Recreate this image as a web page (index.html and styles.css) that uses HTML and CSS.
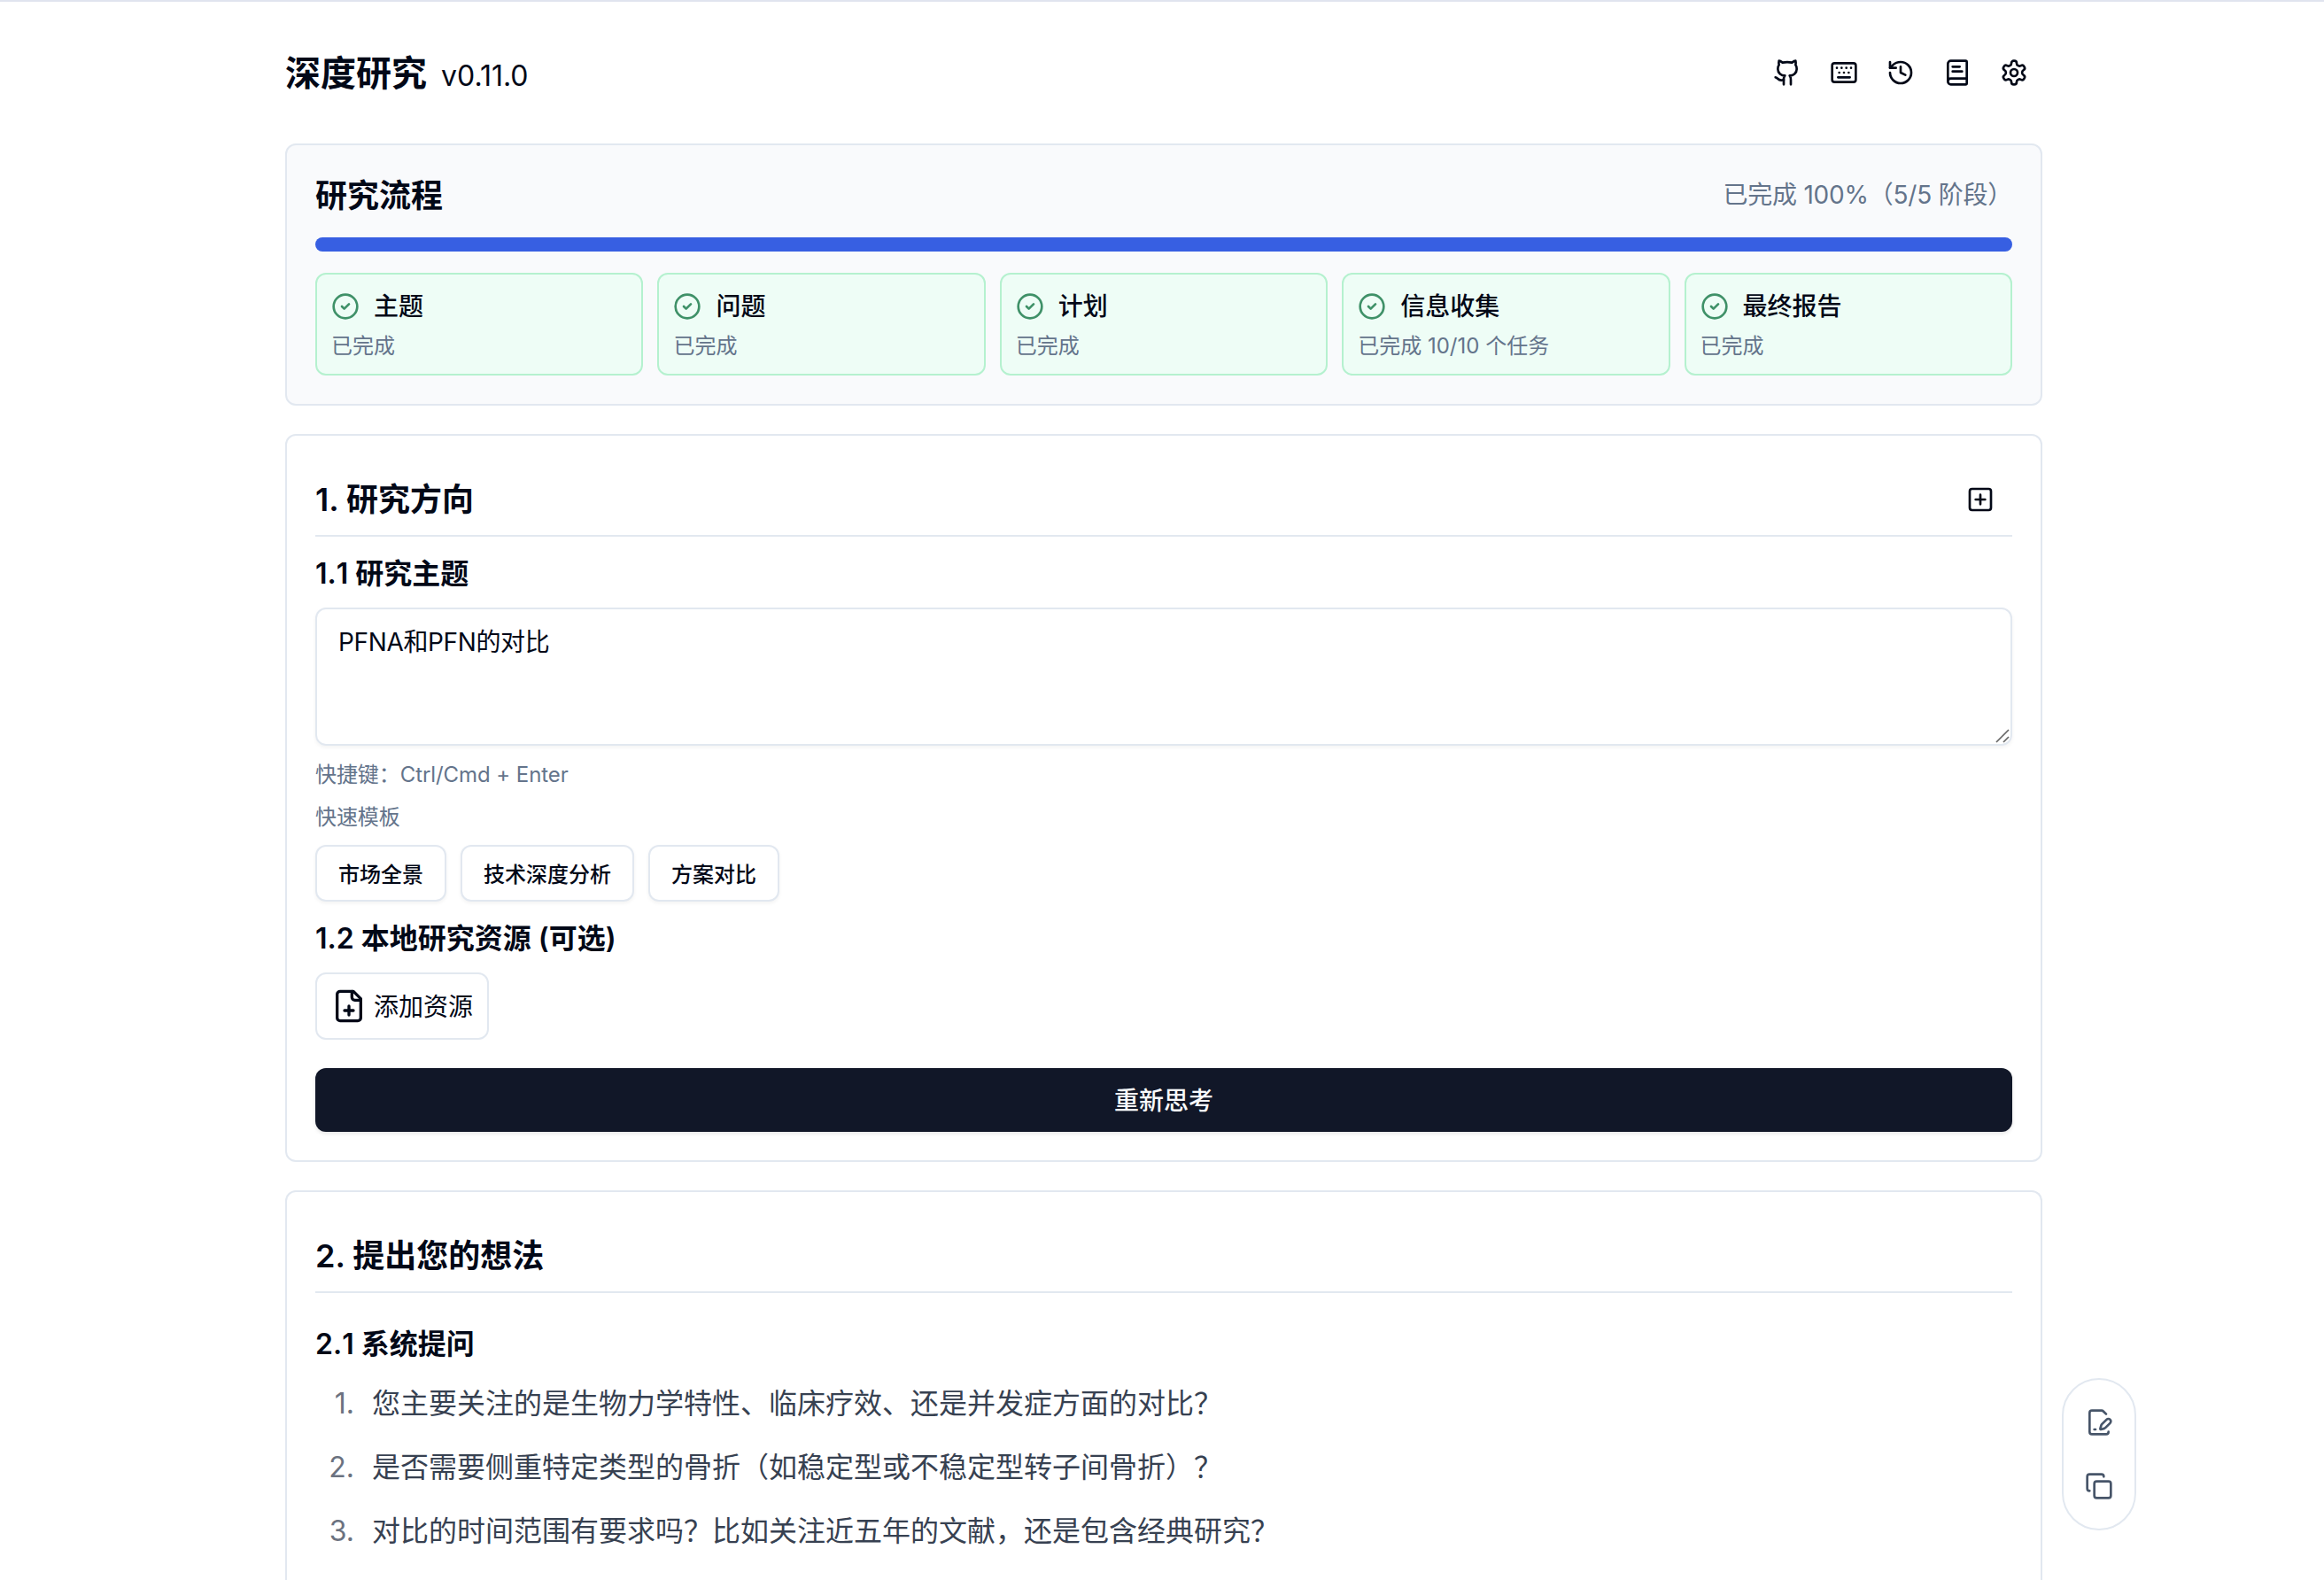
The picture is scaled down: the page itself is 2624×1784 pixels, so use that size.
FILE: index.html
```html
<!DOCTYPE html>
<html lang="zh-CN">
<head>
<meta charset="utf-8">
<title>深度研究</title>
<link rel="stylesheet" href="styles.css">
</head>
<body>
<svg width="0" height="0" class="defs">
  <symbol id="check" viewBox="0 0 24 24"><circle cx="12" cy="12" r="10"/><path d="m9 12 2 2 4-4"/></symbol>
</svg>
<div class="page">
  <header class="header">
    <h1 class="brand">深度研究 <small class="version">v0.11.0</small></h1>
    <nav class="tools">
      <a class="tool"><svg class="icon" viewBox="0 0 24 24"><path d="M15 22v-4a4.8 4.8 0 0 0-1-3.5c3 0 6-2 6-5.5.08-1.25-.27-2.48-1-3.5.28-1.15.28-2.35 0-3.5 0 0-1 0-3 1.5-2.64-.5-5.36-.5-8 0C6 2 5 2 5 2c-.3 1.15-.3 2.35 0 3.5A5.403 5.403 0 0 0 4 9c0 3.5 3 5.5 6 5.5-.39.49-.68 1.05-.85 1.65-.17.6-.22 1.23-.15 1.85v4"/><path d="M9 18c-4.51 2-5-2-7-2"/></svg></a>
      <a class="tool"><svg class="icon" viewBox="0 0 24 24"><path d="M10 8h.01M12 12h.01M14 8h.01M16 12h.01M18 8h.01M6 8h.01M7 16h10M8 12h.01"/><rect width="20" height="16" x="2" y="4" rx="2"/></svg></a>
      <a class="tool"><svg class="icon" viewBox="0 0 24 24"><path d="M3 12a9 9 0 1 0 9-9 9.75 9.75 0 0 0-6.74 2.74L3 8"/><path d="M3 3v5h5M12 7v5l4 2"/></svg></a>
      <a class="tool"><svg class="icon" viewBox="0 0 24 24"><path d="M4 19.5v-15A2.5 2.5 0 0 1 6.5 2H19a1 1 0 0 1 1 1v18a1 1 0 0 1-1 1H6.500a1 1 0 0 1 0-5H20M8 11h8M8 7h6"/></svg></a>
      <a class="tool"><svg class="icon" viewBox="0 0 24 24"><path d="M12.220 2h-.44a2 2 0 0 0-2 2v.18a2 2 0 0 1-1 1.730l-.43.25a2 2 0 0 1-2 0l-.15-.08a2 2 0 0 0-2.730.73l-.22.38a2 2 0 0 0 .73 2.730l.15.1a2 2 0 0 1 1 1.720v.51a2 2 0 0 1-1 1.740l-.15.09a2 2 0 0 0-.73 2.730l.22.38a2 2 0 0 0 2.730.73l.15-.08a2 2 0 0 1 2 0l.43.25a2 2 0 0 1 1 1.730V20a2 2 0 0 0 2 2h.44a2 2 0 0 0 2-2v-.18a2 2 0 0 1 1-1.730l.43-.25a2 2 0 0 1 2 0l.15.08a2 2 0 0 0 2.730-.73l.22-.39a2 2 0 0 0-.73-2.730l-.15-.08a2 2 0 0 1-1-1.740v-.5a2 2 0 0 1 1-1.740l.15-.09a2 2 0 0 0 .73-2.730l-.22-.38a2 2 0 0 0-2.730-.73l-.15.08a2 2 0 0 1-2 0l-.43-.25a2 2 0 0 1-1-1.730V4a2 2 0 0 0-2-2z"/><circle cx="12" cy="12" r="3"/></svg></a>
    </nav>
  </header>

  <section class="card flow">
    <div class="flow-head">
      <h2 class="flow-title">研究流程</h2>
      <span class="flow-status">已完成 100%（5/5 阶段）</span>
    </div>
    <div class="progress"></div>
    <div class="steps">
      <div class="step"><div class="step-name"><svg class="icon ok"><use href="#check"/></svg>主题</div><p class="step-note">已完成</p></div>
      <div class="step"><div class="step-name"><svg class="icon ok"><use href="#check"/></svg>问题</div><p class="step-note">已完成</p></div>
      <div class="step"><div class="step-name"><svg class="icon ok"><use href="#check"/></svg>计划</div><p class="step-note">已完成</p></div>
      <div class="step"><div class="step-name"><svg class="icon ok"><use href="#check"/></svg>信息收集</div><p class="step-note">已完成 10/10 个任务</p></div>
      <div class="step"><div class="step-name"><svg class="icon ok"><use href="#check"/></svg>最终报告</div><p class="step-note">已完成</p></div>
    </div>
  </section>

  <section class="card">
    <div class="card-head">
      <h3 class="card-title">1. 研究方向</h3>
      <a class="add"><svg class="icon" viewBox="0 0 24 24"><rect width="18" height="18" x="3" y="3" rx="2"/><path d="M8 12h8M12 8v8"/></svg></a>
    </div>
    <h4 class="label label-topic">1.1 研究主题</h4>
    <div class="topic">PFNA和PFN的对比<svg class="grip" viewBox="0 0 20 20"><path d="M4 18 18 4M12 18l6-6"/></svg></div>
    <p class="hint">快捷键：Ctrl/Cmd + Enter</p>
    <p class="hint">快速模板</p>
    <div class="templates">
      <button class="template">市场全景</button>
      <button class="template">技术深度分析</button>
      <button class="template">方案对比</button>
    </div>
    <h4 class="label label-resource">1.2 本地研究资源 (可选)</h4>
    <button class="resource"><svg class="icon icon-lg" viewBox="0 0 24 24"><path d="M15 2H6a2 2 0 0 0-2 2v16a2 2 0 0 0 2 2h12a2 2 0 0 0 2-2V7Z"/><path d="M14 2v4a2 2 0 0 0 2 2h4M9 15h6M12 18v-6"/></svg><span class="resource-text">添加资源</span></button>
    <button class="submit">重新思考</button>
  </section>

  <section class="card ideas">
    <div class="card-head"><h3 class="card-title">2. 提出您的想法</h3></div>
    <h4 class="label label-ask">2.1 系统提问</h4>
    <div class="questions">
      <div class="question"><span class="num">1.</span><span>您主要关注的是生物力学特性、临床疗效、还是并发症方面的对比？</span></div>
      <div class="question"><span class="num">2.</span><span>是否需要侧重特定类型的骨折（如稳定型或不稳定型转子间骨折）？</span></div>
      <div class="question"><span class="num">3.</span><span>对比的时间范围有要求吗？比如关注近五年的文献，还是包含经典研究？</span></div>
    </div>
  </section>
</div>

<aside class="dock">
  <svg class="icon" viewBox="0 0 24 24"><path d="m18 5-2.414-2.414A2 2 0 0 0 14.172 2H6a2 2 0 0 0-2 2v16a2 2 0 0 0 2 2h12a2 2 0 0 0 2-2"/><path d="M21.378 12.626a1 1 0 0 0-3.004-3.004l-4.010 4.012a2 2 0 0 0-.506.854l-.837 2.870a.5.5 0 0 0 .62.62l2.870-.837a2 2 0 0 0 .854-.506z"/><path d="M8 18h1"/></svg>
  <svg class="icon" viewBox="0 0 24 24"><rect width="14" height="14" x="8" y="8" rx="2"/><path d="M4 16c-1.100 0-2-.9-2-2V4c0-1.100.9-2 2-2h10c1.100 0 2 .9 2 2"/></svg>
</aside>
</body>
</html>
```
FILE: styles.css
```css
* { box-sizing: border-box; margin: 0; padding: 0; }
html, body { height: 1784px; overflow: hidden; }
body {
  background: #fff;
  border-top: 2px solid #e0e4ef;
  color: #020817;
  font-family: Inter, "Noto Sans CJK SC", sans-serif;
  font-size: 32px;
  text-spacing-trim: space-all;
}
button { font: inherit; color: inherit; background: #fff; }
.defs { position: absolute; }
.page { width: 1984px; margin-left: 322px; }

.icon {
  width: 32px;
  height: 32px;
  flex: none;
  fill: none;
  stroke: currentColor;
  stroke-width: 2;
  stroke-linecap: round;
  stroke-linejoin: round;
}
.icon-lg { width: 40px; height: 40px; }

.header { height: 160px; display: flex; justify-content: space-between; }
.brand { font-size: 40px; line-height: 56px; font-weight: 600; padding-top: 53px; white-space: nowrap; }
.version { font-size: 32px; font-weight: 400; margin-left: 6px; }
.tools { display: flex; height: 160px; }
.tool { width: 64px; display: flex; justify-content: center; align-items: center; }

.card { border: 2px solid #e2e8f0; border-radius: 12px; padding: 0 32px; }
.card + .card { margin-top: 32px; }

.flow { background: #f9fafc; height: 296px; padding-top: 32px; }
.flow-head { display: flex; justify-content: space-between; height: 48px; }
.flow-title { font-size: 36px; line-height: 50px; font-weight: 600; }
.flow-status { font-size: 28px; line-height: 48px; letter-spacing: -0.22px; color: #64748b; }
.progress { height: 16px; border-radius: 8px; background: #375fe2; margin: 24px 0; }
.steps { display: grid; grid-template-columns: repeat(5, 1fr); gap: 16px; }
.step { height: 116px; border: 2px solid #b5f1cf; border-radius: 12px; background: #eefdf6; padding: 16px; }
.step-name { display: flex; align-items: center; gap: 16px; height: 40px; font-size: 28px; line-height: 42px; font-weight: 500; }
.step-note { font-size: 24px; line-height: 34px; margin-top: 8px; color: #64748b; }
.ok { color: #3f9168; }

.card-head { height: 114px; padding-top: 36px; border-bottom: 2px solid #e2e8f0; display: flex; justify-content: space-between; }
.card-title { font-size: 36px; line-height: 73px; font-weight: 600; }
.add { width: 72px; height: 72px; display: flex; align-items: center; justify-content: center; }
.label { font-size: 32px; height: 48px; line-height: 51px; font-weight: 600; font-kerning: none; }
.label-topic { margin: 16px 0; }
.topic { position: relative; height: 156px; border: 2px solid #e2e8f0; border-radius: 12px; padding: 17px 24px; font-size: 28px; line-height: 40px; letter-spacing: -0.36px; box-shadow: 0 2px 4px rgb(0 0 0 / 5%); }
.grip { position: absolute; right: 0; bottom: 0; width: 20px; height: 20px; fill: none; stroke: #666; stroke-width: 1.7; }
.hint { font-size: 24px; height: 32px; line-height: 34px; margin-top: 16px; color: #64748b; letter-spacing: -0.07px; }
.templates { display: flex; gap: 16px; margin-top: 16px; }
.template { height: 64px; border: 2px solid #e2e8f0; border-radius: 12px; padding: 0 24px 2px; font-size: 24px; font-weight: 500; box-shadow: 0 2px 4px rgb(0 0 0 / 5%); }
.label-resource { margin: 16px 0; }
.resource { display: flex; align-items: center; gap: 8px; height: 76px; border: 2px solid #e2e8f0; border-radius: 12px; padding: 0 16px; font-size: 28px; }
.resource-text { padding-bottom: 2px; }
.submit { display: block; width: 100%; height: 72px; margin: 32px 0; padding-bottom: 2px; border: 0; border-radius: 12px; background: #111728; color: #f8fafc; font-size: 28px; font-weight: 500; box-shadow: 0 2px 4px rgb(0 0 0 / 10%); }

.ideas { height: 440px; border-bottom: 0; border-radius: 12px 12px 0 0; }
.label-ask { margin-top: 32px; }
.questions { padding-left: 10px; margin-top: 9px; color: #374151; }
.question { display: flex; line-height: 72px; white-space: nowrap; }
.num { width: 34px; margin-right: 20px; text-align: right; color: #6b7280; }

.dock {
  position: fixed;
  left: 2328px;
  top: 1556px;
  width: 84px;
  height: 172px;
  border: 2px solid #e2e8f0;
  border-radius: 42px;
  background: #fff;
  color: #475569;
  display: flex;
  flex-direction: column;
  align-items: center;
  justify-content: center;
  gap: 40px;
}
```
